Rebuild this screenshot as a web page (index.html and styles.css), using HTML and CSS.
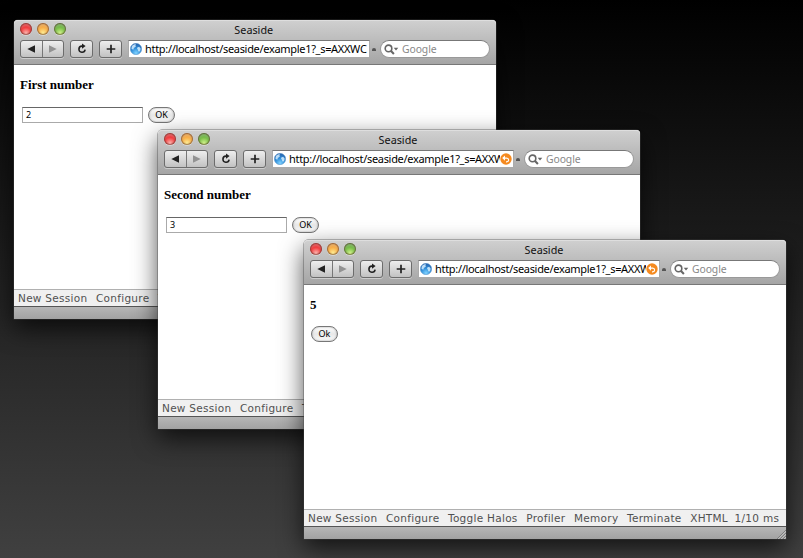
FILE: index.html
```
<!DOCTYPE html>
<html lang="en">
<head>
<meta charset="utf-8">
<title>Seaside</title>
<link rel="stylesheet" href="styles.css">
</head>
<body>
<svg class="defs" aria-hidden="true">
  <defs>
    <radialGradient id="globe-fill" cx=".5" cy=".85" r=".8"><stop offset="0" stop-color="#7fd2ff"/><stop offset=".5" stop-color="#3492dc"/><stop offset="1" stop-color="#2464b0"/></radialGradient>
    <symbol id="back" viewBox="0 0 8 8"><path d="M8 .3v7.4L.3 4z"/></symbol>
    <symbol id="forward" viewBox="0 0 8 8"><path d="M0 .3v7.4L7.7 4z"/></symbol>
    <symbol id="reload" viewBox="0 0 10 12"><path d="M5.6 3.1H4.9a3.1 3.1 0 1 0 3.2 3.6" fill="none" stroke="#222" stroke-width="1.6"/><path d="M5 .4l3.6 2.7L5 5.8z" fill="#222"/></symbol>
    <symbol id="plus" viewBox="0 0 10 10"><path d="M5 .7v8.6M.7 5h8.6" stroke="#222" stroke-width="1.7"/></symbol>
    <symbol id="globe" viewBox="0 0 12 12"><circle cx="6" cy="6" r="5.7" fill="url(#globe-fill)" stroke="#5d94c6" stroke-width=".5"/><path d="M2 2.9C3 1.7 4.6 1.1 6 1.2L5.4 2.4 6 3.2 4.6 4.6 3.6 5 3.9 6.2 2.6 6.6 1.4 5.4zM7.3 4.5l1.8-.8 1.5 1.7-.3 2-1.2 1.4-1-.7v-1.3l-1-.9z" fill="#d5efff" opacity=".85"/></symbol>
    <symbol id="snap" viewBox="0 0 12 12"><circle cx="6" cy="6" r="5.7" fill="#f58a1f"/><path d="M4 5.1h2.7a1.9 1.9 0 0 1 0 3.8H6" fill="none" stroke="#fff" stroke-width="1.2"/><path d="M5 2.5v5.2L2.2 5.1z" fill="#fff"/></symbol>
    <symbol id="search" viewBox="0 0 15 11"><circle cx="4.5" cy="4.4" r="3.3" fill="none" stroke="#666" stroke-width="1.6"/><path d="M6.8 6.8l3.1 3.2" stroke="#666" stroke-width="2"/><path d="M9.7 3.7h4.6L12 6.4z" fill="#666"/></symbol>
    <symbol id="grip" viewBox="0 0 10 10"><path d="M1 10l9-9M4 10l6-6M7 10l3-3" stroke="#777" stroke-width=".9"/><path d="M2 10l8-8M5 10l5-5M8 10l2-2" stroke="#ccc" stroke-width=".6"/></symbol>
  </defs>
</svg>

<main class="desktop">
  <section class="window first">
    <header class="chrome">
      <div class="titlebar"><div class="lights"><i class="red"></i><i class="amber"></i><i class="green"></i></div><span class="title">Seaside</span></div>
      <div class="toolbar">
        <div class="button history"><span><svg><use href="#back"/></svg></span><span class="dim"><svg><use href="#forward"/></svg></span></div>
        <div class="button reload"><svg><use href="#reload"/></svg></div>
        <div class="button add"><svg><use href="#plus"/></svg></div>
        <div class="address"><svg><use href="#globe"/></svg><span class="url">http://localhost/seaside/example1?_s=AXXWC</span></div>
        <i class="divider"></i>
        <div class="search"><svg><use href="#search"/></svg><span>Google</span></div>
      </div>
    </header>
    <div class="page">
      <h1>First number</h1>
      <div class="form"><span class="field">2</span><span class="submit">OK</span></div>
    </div>
    <nav class="tools"><span>New Session</span><span>Configure</span><span>Toggle Halos</span><span>Profiler</span><span>Memory</span><span>Terminate</span><span class="xhtml">XHTML</span><span>1/10 ms</span></nav>
    <footer class="status"><svg><use href="#grip"/></svg></footer>
  </section>

  <section class="window second">
    <header class="chrome">
      <div class="titlebar"><div class="lights"><i class="red"></i><i class="amber"></i><i class="green"></i></div><span class="title">Seaside</span></div>
      <div class="toolbar">
        <div class="button history"><span><svg><use href="#back"/></svg></span><span class="dim"><svg><use href="#forward"/></svg></span></div>
        <div class="button reload"><svg><use href="#reload"/></svg></div>
        <div class="button add"><svg><use href="#plus"/></svg></div>
        <div class="address"><svg><use href="#globe"/></svg><span class="url">http://localhost/seaside/example1?_s=AXXW</span><svg><use href="#snap"/></svg></div>
        <i class="divider"></i>
        <div class="search"><svg><use href="#search"/></svg><span>Google</span></div>
      </div>
    </header>
    <div class="page">
      <h1>Second number</h1>
      <div class="form"><span class="field">3</span><span class="submit">OK</span></div>
    </div>
    <nav class="tools"><span>New Session</span><span>Configure</span><span>Toggle Halos</span><span>Profiler</span><span>Memory</span><span>Terminate</span><span class="xhtml">XHTML</span><span>1/10 ms</span></nav>
    <footer class="status"><svg><use href="#grip"/></svg></footer>
  </section>

  <section class="window third">
    <header class="chrome">
      <div class="titlebar"><div class="lights"><i class="red"></i><i class="amber"></i><i class="green"></i></div><span class="title">Seaside</span></div>
      <div class="toolbar">
        <div class="button history"><span><svg><use href="#back"/></svg></span><span class="dim"><svg><use href="#forward"/></svg></span></div>
        <div class="button reload"><svg><use href="#reload"/></svg></div>
        <div class="button add"><svg><use href="#plus"/></svg></div>
        <div class="address"><svg><use href="#globe"/></svg><span class="url">http://localhost/seaside/example1?_s=AXXW</span><svg><use href="#snap"/></svg></div>
        <i class="divider"></i>
        <div class="search"><svg><use href="#search"/></svg><span>Google</span></div>
      </div>
    </header>
    <div class="page">
      <h1>5</h1>
      <div class="form"><span class="submit">Ok</span></div>
    </div>
    <nav class="tools"><span>New Session</span><span>Configure</span><span>Toggle Halos</span><span>Profiler</span><span>Memory</span><span>Terminate</span><span class="xhtml">XHTML</span><span>1/10 ms</span></nav>
    <footer class="status"><svg><use href="#grip"/></svg></footer>
  </section>
</main>
</body>
</html>
```
FILE: styles.css
```
* { box-sizing: border-box; }
body { margin: 0; }
.defs { position: absolute; width: 0; height: 0; }
.desktop {
  position: relative;
  width: 803px;
  height: 558px;
  overflow: hidden;
  background: linear-gradient(#000 0, #404040 100%);
}
.window {
  position: absolute;
  display: flex;
  flex-direction: column;
  width: 482px;
  height: 299px;
  border-radius: 4px 4px 0 0;
  background: #fff;
  box-shadow: 0 0 0 .5px rgba(70,70,70,.7), 0 9px 24px rgba(0,0,0,.7);
}
.first { left: 14px; top: 20px; width: 481.5px; }
.second { left: 158px; top: 130px; }
.third { left: 304px; top: 240px; }

.chrome {
  height: 45px;
  border-bottom: 1px solid #777;
  border-radius: 4px 4px 0 0;
  background: linear-gradient(#d0d0d0, #a5a5a5);
  box-shadow: inset 0 1px #dedede;
  font: 11px/14px "Noto Sans", sans-serif;
  color: #111;
}
.titlebar { display: grid; grid-template-columns: 60px 1fr 62px; height: 20px; padding-top: 3px; }
.title { text-align: center; line-height: 14px; font-size: 10.8px; }
.lights { display: flex; gap: 5px; padding-left: 6px; }
.lights i {
  width: 12px;
  height: 12px;
  border-radius: 50%;
  box-shadow: inset 0 0 1px 1px rgba(70,30,20,.5), inset 0 3px 2px rgba(255,255,255,.25), 0 1px rgba(255,255,255,.35);
}
.red { background: radial-gradient(circle at 50% 85%, #ffb8b2, #f0383a 50%, #c01f22); }
.amber { background: radial-gradient(circle at 50% 85%, #fff09a, #f7ac44 50%, #c8741d); }
.green { background: radial-gradient(circle at 50% 85%, #d4f58e, #74bb45 50%, #3c7a25); }

.toolbar { display: flex; align-items: center; height: 18px; padding-left: 6px; }
.button {
  display: flex;
  align-items: center;
  justify-content: center;
  height: 18px;
  border: 1px solid #6c6c6c;
  border-radius: 3px;
  background: linear-gradient(#eee, #c2c2c2);
  box-shadow: 0 1px rgba(255,255,255,.4);
}
.history { width: 44px; margin-right: 6px; }
.history span { flex: 1; display: flex; align-items: center; justify-content: center; height: 16px; }
.history svg { width: 8px; height: 8px; fill: #222; }
.history .dim { border-left: 1px solid #777; }
.history .dim svg { fill: #929292; }
.reload { width: 23px; margin-right: 6px; }
.reload svg { width: 10px; height: 12px; margin-top: -1px; }
.add { width: 23px; margin-right: 6px; }
.add svg { width: 10px; height: 10px; }
.address {
  display: flex;
  align-items: center;
  width: 242px;
  height: 18px;
  padding: 0 1px;
  border: 1px solid #aaa;
  border-top-color: #777;
  background: #fff;
}
.address svg { flex: none; width: 12px; height: 12px; }
.url { flex: 1; min-width: 0; margin-left: 3px; overflow: hidden; white-space: nowrap; font-size: 11px; letter-spacing: -.31px; color: #000; }
.divider { width: 4px; height: 3px; margin: 0 4px 0 2px; border-radius: 4px 4px 0 0; background: #555; }
.search {
  display: flex;
  align-items: center;
  width: 110px;
  height: 18px;
  padding-left: 3px;
  border: 1px solid #999;
  border-top-color: #777;
  border-radius: 9px;
  background: #fff;
  color: #888;
  font-size: 10.4px;
  letter-spacing: -.1px;
}
.search svg { width: 15px; height: 11px; margin-right: 3px; }

.page { flex: 1; padding: 12px 6px 0; }
h1 { margin: 0; font: bold 13px/15px "Liberation Serif", serif; letter-spacing: -.03px; color: #000; }
.form { display: flex; gap: 5px; margin-top: 15px; padding-left: 2px; }
.field {
  width: 121px;
  height: 16px;
  padding-left: 3px;
  border: 1px solid #aaa;
  border-top-color: #666;
  font: 9px/14px "Noto Sans", sans-serif;
  background: #fff;
}
.submit {
  width: 27px;
  height: 16px;
  border: 1px solid #777;
  border-radius: 8px;
  background: linear-gradient(#fff, #e8e8e8 50%, #fafafa);
  box-shadow: inset 0 0 2px #999;
  font: 9px/14px "Noto Sans", sans-serif;
  text-align: center;
}
.third .form { margin-top: 14px; padding-left: 1px; }

.tools {
  display: flex;
  gap: 8.6px;
  height: 17px;
  padding-left: 4px;
  border-top: 1px solid #b0b0b0;
  background: #f0f0f0;
  font: 10.5px/16px "DejaVu Sans", sans-serif;
  letter-spacing: .28px;
  color: #505050;
  white-space: nowrap;
  overflow: hidden;
}
.xhtml { margin-right: -2px; }
.status {
  display: flex;
  justify-content: flex-end;
  align-items: flex-end;
  height: 13px;
  border-top: 1px solid #555;
  background: linear-gradient(#b6b6b6, #a2a2a2);
}
.status svg { width: 10px; height: 10px; }
```
